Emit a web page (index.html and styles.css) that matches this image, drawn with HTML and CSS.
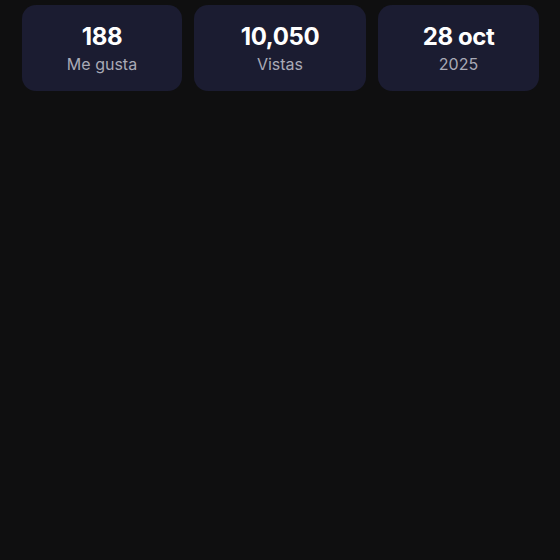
FILE: index.html
```html
<!DOCTYPE html>
<html lang="es">
<head>
    <meta charset="UTF-8">
    <title>Estadísticas</title>
    <link rel="stylesheet" href="styles.css">
</head>
<body>
    <div class="stats">
        <div class="stat">
            <strong>188</strong>
            <span>Me gusta</span>
        </div>
        <div class="stat">
            <strong>10,050</strong>
            <span>Vistas</span>
        </div>
        <div class="stat">
            <strong>28 oct</strong>
            <span>2025</span>
        </div>
    </div>
</body>
</html>
```

FILE: styles.css
```css
* {
    margin: 0;
    padding: 0;
    box-sizing: border-box;
}
body {
    background: #0f0f10;
    font-family: "Inter", "Noto Sans", sans-serif;
    color: #fff;
}
.stats {
    display: grid;
    grid-template-columns: 160fr 172fr 161fr;
    gap: 12px;
    padding: 5px 21px 0 22px;
}
.stat {
    height: 86px;
    background: #1b1c31;
    border-radius: 14px;
    display: flex;
    flex-direction: column;
    align-items: center;
    justify-content: center;
    gap: 2px;
    padding-top: 2px;
}
.stat strong {
    font-size: 24px;
    font-weight: 700;
    line-height: 28px;
    letter-spacing: -0.4px;
}
.stat span {
    font-size: 16px;
    line-height: 22px;
    color: #a9aab6;
}
```
